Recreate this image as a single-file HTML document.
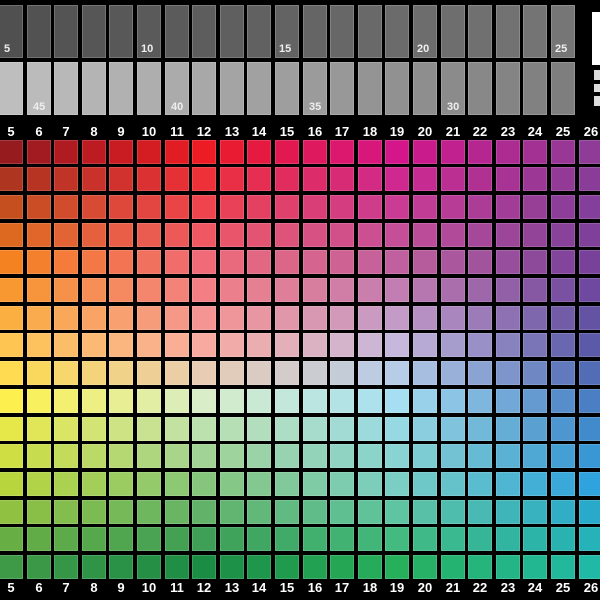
<!DOCTYPE html>
<html><head><meta charset="utf-8"><style>
html,body{margin:0;padding:0;background:#000;width:600px;height:600px;overflow:hidden;position:relative;font-family:"Liberation Sans",sans-serif}
.b{position:absolute;box-sizing:border-box}
.g{border:1px solid rgba(255,255,255,.18)}
.c{border:1px solid rgba(255,255,255,.15)}
.l{position:absolute;color:#fff;font-weight:bold;font-size:13px;width:30px;text-align:center;line-height:12px}
.gl{position:absolute;color:#eee;font-weight:bold;font-size:11px;line-height:11px}
</style></head><body>
<div id="root"></div>
<div class="b" style="left:592px;top:12px;width:8px;height:53px;background:#fff"></div>
<div class="b" style="left:594px;top:70px;width:6px;height:10px;background:#ddd"></div>
<div class="b" style="left:594px;top:84px;width:6px;height:8px;background:#ddd"></div>
<div class="b" style="left:594px;top:96px;width:6px;height:10px;background:#ddd"></div>
<script>
function h(s){return [parseInt(s.substr(1,2),16),parseInt(s.substr(3,2),16),parseInt(s.substr(5,2),16)]}
var R=[0,4,7,9,12,15],C=[0,7,14,21];
var A=[
["#961b1f","#ed1c24","#d4168a","#8e3c97"],
["#f58220","#f06a78","#c0609e","#78419a"],
["#fec552","#f8aaa0","#c6b8dc","#5a5aa8"],
["#fdf04e","#d8edc8","#a6dff2","#4a7fc3"],
["#b8d53e","#86c67c","#7acec4","#2fa3dd"],
["#3f9a48","#1b8c44","#27b05c","#20b9a6"]].map(function(r){return r.map(h)});
function seg(a,v){for(var i=0;i<a.length-1;i++){if(v<=a[i+1])return [i,(v-a[i])/(a[i+1]-a[i])]}return [a.length-2,1]}
function col(r,c){var sr=seg(R,r),sc=seg(C,c);var i=sr[0],j=sc[0],t=sr[1],u=sc[1];var o=[];
for(var k=0;k<3;k++){var a=A[i][j][k]*(1-u)+A[i][j+1][k]*u,b=A[i+1][j][k]*(1-u)+A[i+1][j+1][k]*u;o.push(Math.round(a*(1-t)+b*t))}
return "rgb("+o.join(",")+")"}
var s="";
for(var c=0;c<22;c++){var cx=11+27.6*c,x=Math.round(cx-12);
 for(var r=0;r<16;r++){var y=Math.round(139.5+27.7*r);
  s+='<div class="b c" style="left:'+x+'px;top:'+y+'px;width:24px;height:24px;background:'+col(r,c)+'"></div>';}
 s+='<div class="l" style="left:'+Math.round(cx-15)+'px;top:126px">'+(5+c)+'</div>';
 s+='<div class="l" style="left:'+Math.round(cx-15)+'px;top:582px">'+(5+c)+'</div>';
 if(c<=20){var d=Math.round(80+(118-80)*c/20),lg=Math.round(190-(190-126)*c/20);
  s+='<div class="b g" style="left:'+x+'px;top:5px;width:24px;height:53px;background:rgb('+d+','+d+','+d+')"></div>';
  s+='<div class="b g" style="left:'+x+'px;top:62px;width:24px;height:53px;background:rgb('+lg+','+lg+','+lg+')"></div>';
  if(c%5==0)s+='<div class="gl" style="left:'+(x+(c==0?5:4))+'px;top:44px">'+(5+c)+'</div>';
  if(c%5==1)s+='<div class="gl" style="left:'+(x+6)+'px;top:102px">'+(46-c)+'</div>';
 }}
document.getElementById("root").innerHTML=s;
</script>
</body></html>
